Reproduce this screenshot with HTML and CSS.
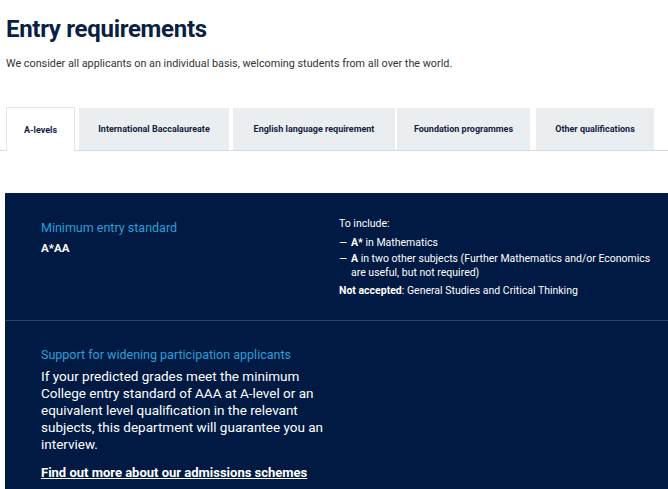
FILE: index.html
```html
<!DOCTYPE html>
<html lang="en">
<head>
<meta charset="utf-8">
<title>Entry requirements</title>
<link rel="stylesheet" href="styles.css">
</head>
<body>
<main class="page">
  <h1 class="title">Entry requirements</h1>
  <p class="intro">We consider all applicants on an individual basis, welcoming students from all over the world.</p>
  <nav class="tabs">
    <a class="tab tab-active" href="#">A-levels</a>
    <a class="tab tab-ib" href="#">International Baccalaureate</a>
    <a class="tab tab-eng" href="#">English language requirement</a>
    <a class="tab tab-found" href="#">Foundation programmes</a>
    <a class="tab tab-other" href="#">Other qualifications</a>
  </nav>
  <section class="panel">
    <div class="row row-first">
      <div class="col-left">
        <h2 class="label">Minimum entry standard</h2>
        <p class="grade">A*AA</p>
      </div>
      <div class="col-right">
        <p class="small">To include:</p>
        <ul class="dash-list">
          <li><span class="dash">—</span><span class="item"><b>A*</b> in Mathematics</span></li>
          <li><span class="dash">—</span><span class="item"><b>A</b> in two other subjects (Further Mathematics and/or Economics are useful, but not required)</span></li>
        </ul>
        <p class="small"><b>Not accepted</b>: General Studies and Critical Thinking</p>
      </div>
    </div>
    <div class="row row-second">
      <div class="col-left">
        <h2 class="label">Support for widening participation applicants</h2>
        <p class="body">If your predicted grades meet the minimum College entry standard of AAA at A-level or an equivalent level qualification in the relevant subjects, this department will guarantee you an interview.</p>
        <a class="link" href="#">Find out more about our admissions schemes</a>
      </div>
    </div>
  </section>
</main>
</body>
</html>
```
FILE: styles.css
```css
* { box-sizing: border-box; }
html, body { margin: 0; padding: 0; background: #fff; }
body {
  font-family: Roboto, "Liberation Sans", sans-serif;
  color: #333;
  overflow: hidden;
}
.page {
  padding-left: 5px;
  width: 668px;
}
.title {
  margin: 0;
  padding-top: 13px;
  padding-left: 1px;
  font-size: 24px;
  line-height: 32px;
  font-weight: 700;
  color: #0a1f44;
  letter-spacing: -0.3px;
}
.intro {
  margin: 12px 0 0 1px;
  font-size: 10.8px;
  line-height: 14px;
  color: #333;
}
.tabs {
  display: flex;
  align-items: flex-end;
  margin-top: 36px;
  margin-left: -5px;
  padding-left: 6px;
  border-bottom: 1px solid #d7dadd;
  height: 44px;
}
.tab {
  flex: 0 0 auto;
  display: flex;
  align-items: center;
  justify-content: center;
  height: 42px;
  background: #ebeef0;
  color: #14223d;
  font-size: 9px;
  font-weight: 700;
  text-decoration: none;
  margin-right: 4px;
  white-space: nowrap;
}
.tab-active {
  background: #fff;
  border: 1px solid #e3e6e9;
  border-bottom: none;
  height: 44px;
  margin-bottom: -1px;
  width: 69px;
}
.tab-ib { width: 150px; }
.tab-eng { width: 162px; margin-right: 2px; }
.tab-found { width: 133px; margin-right: 6px; }
.tab-other { width: 118px; }
.panel {
  margin-top: 42px;
  background: #001a43;
  color: #fff;
}
.row {
  display: flex;
  padding-left: 36px;
}
.row-first {
  height: 128px;
  border-bottom: 1px solid #2a4266;
  padding-top: 27px;
}
.row-second {
  padding-top: 26px;
  padding-bottom: 20px;
}
.col-left { width: 298px; }
.col-right { width: 315px; margin-top: -3px; }
.label {
  margin: 0;
  font-size: 12.5px;
  line-height: 16px;
  font-weight: 400;
  color: #2b9fd8;
}
.grade {
  margin: 5px 0 0;
  font-size: 11.5px;
  font-weight: 700;
  line-height: 14px;
}
.small {
  margin: 0;
  font-size: 10.5px;
  line-height: 14px;
}
.dash-list {
  list-style: none;
  margin: 5px 0 4px;
  padding: 0;
  font-size: 10.5px;
  line-height: 14px;
}
.dash-list li {
  display: flex;
  margin-bottom: 2px;
}
.dash {
  flex: 0 0 12px;
}
.item {
  flex: 1 1 auto;
}
.body {
  margin: 5px 0 0;
  font-size: 13.5px;
  line-height: 17px;
  width: 292px;
}
.link {
  display: inline-block;
  margin-top: 11px;
  color: #fff;
  font-weight: 700;
  font-size: 13px;
  line-height: 17px;
}
```
